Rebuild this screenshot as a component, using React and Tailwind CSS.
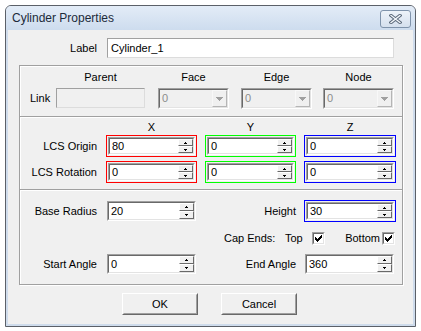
import React from 'react';

function Arrow({ up, color = '#000' }) {
  return (
    <svg width="3" height="2" viewBox="0 0 3 2" shapeRendering="crispEdges">
      {up ? (
        <path d="M1 0h1v1h1v1H0V1h1z" fill={color} />
      ) : (
        <path d="M0 0h3v1H2v1H1V1H0z" fill={color} />
      )}
    </svg>
  );
}

function ComboArrow() {
  return (
    <svg width="7" height="4" viewBox="0 0 7 4" shapeRendering="crispEdges">
      <path d="M0 0h7v1H6v1H5v1H4v1H3V3H2V2H1V1H0z" fill="#a0a0a0" />
    </svg>
  );
}

function Sunken({ className, inner = 'bg-white', children }) {
  return (
    <div className={`border border-t-[#a0a0a0] border-l-[#a0a0a0] border-r-white border-b-white ${className}`}>
      <div className={`flex h-full w-full border border-t-[#696969] border-l-[#696969] border-r-[#e3e3e3] border-b-[#e3e3e3] ${inner}`}>
        {children}
      </div>
    </div>
  );
}

function SpinBtn({ up }) {
  return (
    <div className="flex flex-1 items-center justify-center border border-t-white border-l-white border-r-[#696969] border-b-[#696969] bg-[#f0f0f0]">
      <Arrow up={up} />
    </div>
  );
}

function Spin({ value, className }) {
  return (
    <Sunken className={className}>
      <span className="flex flex-1 items-center pl-[2px] leading-none">{value}</span>
      <div className="flex h-full w-[15px] flex-col">
        <SpinBtn up />
        <SpinBtn />
      </div>
    </Sunken>
  );
}

function Combo() {
  return (
    <Sunken className="h-[21px] w-[71px]" inner="bg-[#f0f0f0]">
      <span className="flex flex-1 items-center pl-[2px] text-[#8c8c8c]">0</span>
      <div className="flex w-[15px] items-center justify-center border border-t-[#f8f8f8] border-l-[#f8f8f8] border-r-[#b5b5b5] border-b-[#b5b5b5] bg-[#f0f0f0]">
        <ComboArrow />
      </div>
    </Sunken>
  );
}

function Check() {
  return (
    <Sunken className="h-[13px] w-[13px]">
      <svg width="9" height="9" viewBox="0 0 9 9" shapeRendering="crispEdges">
        <path d="M7 1h1v3H7v1H6v1H5v1H4v1H3V7H2V6H1V3h1v1h1v1h1V4h1V3h1V2h1z" fill="#000" />
      </svg>
    </Sunken>
  );
}

function Button({ children, className }) {
  return (
    <div className={`h-[22px] w-[76px] border border-t-white border-l-white border-r-[#696969] border-b-[#696969] ${className}`}>
      <div className="flex h-full w-full items-center justify-center border border-t-[#f0f0f0] border-l-[#f0f0f0] border-r-[#a0a0a0] border-b-[#a0a0a0] bg-[#f0f0f0]">
        {children}
      </div>
    </div>
  );
}

function Header({ children, className }) {
  return <div className={`h-[13px] text-center leading-[13px] ${className}`}>{children}</div>;
}

export default function App() {
  return (
    <div className="h-[331px] w-[421px] bg-white pl-[5px] pt-[5px] font-['Liberation_Sans',Arial,sans-serif] text-[11px] text-black">
      <div className="flex h-[322px] w-[411px] flex-col overflow-hidden rounded-t-[6px] border border-[#5b6068] bg-[#cfdcec]">
        {/* title bar */}
        <div className="flex h-[24px] items-center justify-between bg-gradient-to-b from-[#e3ecf7] to-[#cddcee] pl-[6px] pr-[4px]">
          <span className="text-[12px] text-[#1c2a3a]">Cylinder Properties</span>
          <div className="mt-[1px] flex h-[18px] w-[31px] items-center justify-center rounded-[3px] border border-[#7f93ab] bg-gradient-to-b from-[#eef3f9] to-[#d5e0ee]">
            <svg width="13" height="10" viewBox="0 0 13 10">
              <path d="M2 1.5l9 7M11 1.5l-9 7" stroke="#5d6b7c" strokeWidth="3.4" strokeLinecap="square" />
              <path d="M2 1.5l9 7M11 1.5l-9 7" stroke="#f4f7fb" strokeWidth="1.3" strokeLinecap="square" />
            </svg>
          </div>
        </div>

        {/* client */}
        <div className="mx-[2px] h-[294px] bg-[#f0f0f0]">
          <div className="mt-[8px] flex h-[20px] items-center">
            <div className="w-[89px] text-right">Label</div>
            <div className="ml-[10px] flex h-[20px] w-[287px] items-center border border-t-[#a0a0a0] border-l-[#a0a0a0] border-r-[#dcdcdc] border-b-[#dcdcdc] bg-white pl-[3px]">
              Cylinder_1
            </div>
          </div>

          <div className="ml-[11px] mt-[7px] w-[384px] border border-[#a0a0a0] shadow-[inset_1px_1px_0_#fff,1px_1px_0_#fff]">
            {/* link */}
            <div className="flex h-[50px] pl-[10px] pt-[5px]">
              <div className="flex w-[26px] flex-col">
                <Header />
                <div className="mt-[4px] flex h-[20px] items-center">Link</div>
              </div>
              <div className="flex w-[89px] flex-col">
                <Header>Parent</Header>
                <div className="mt-[4px] h-[20px] border border-t-[#a0a0a0] border-l-[#a0a0a0] border-r-[#dcdcdc] border-b-[#dcdcdc] bg-[#f0f0f0]" />
              </div>
              <div className="ml-[13px] flex w-[71px] flex-col">
                <Header>Face</Header>
                <div className="mt-[4px]"><Combo /></div>
              </div>
              <div className="ml-[12px] flex w-[71px] flex-col">
                <Header>Edge</Header>
                <div className="mt-[4px]"><Combo /></div>
              </div>
              <div className="ml-[11px] flex w-[71px] flex-col">
                <Header>Node</Header>
                <div className="mt-[4px]"><Combo /></div>
              </div>
            </div>

            {/* lcs */}
            <div className="h-[73px] border-t border-[#a0a0a0] pt-[4px] shadow-[inset_0_1px_0_#fff]">
              <div className="flex pl-[86px]">
                <Header className="w-[91px]">X</Header>
                <Header className="ml-[8px] w-[91px]">Y</Header>
                <Header className="ml-[8px] w-[92px]">Z</Header>
              </div>
              <div className="mt-[1px] flex h-[22px] items-center">
                <div className="w-[77px] text-right">LCS Origin</div>
                <div className="ml-[9px] h-[22px] w-[91px] border border-[#ff0000] p-px"><Spin value="80" className="h-full w-full" /></div>
                <div className="ml-[8px] h-[22px] w-[91px] border border-[#00ff00] p-px"><Spin value="0" className="h-full w-full" /></div>
                <div className="ml-[8px] h-[22px] w-[92px] border border-[#0000ff] p-px"><Spin value="0" className="h-full w-full" /></div>
              </div>
              <div className="mt-[4px] flex h-[22px] items-center">
                <div className="w-[77px] text-right">LCS Rotation</div>
                <div className="ml-[9px] h-[22px] w-[91px] border border-[#ff0000] p-px"><Spin value="0" className="h-full w-full" /></div>
                <div className="ml-[8px] h-[22px] w-[91px] border border-[#00ff00] p-px"><Spin value="0" className="h-full w-full" /></div>
                <div className="ml-[8px] h-[22px] w-[92px] border border-[#0000ff] p-px"><Spin value="0" className="h-full w-full" /></div>
              </div>
            </div>

            {/* geometry */}
            <div className="h-[95px] border-t border-[#a0a0a0] pt-[10px] shadow-[inset_0_1px_0_#fff]">
              <div className="flex h-[22px] items-center">
                <div className="w-[77px] text-right">Base Radius</div>
                <Spin value="20" className="ml-[10px] h-[20px] w-[89px]" />
                <div className="w-[100px] text-right">Height</div>
                <div className="ml-[8px] h-[22px] w-[92px] border border-[#0000ff] p-px"><Spin value="30" className="h-full w-full" /></div>
              </div>
              <div className="mt-[10px] flex h-[13px] items-center">
                <div className="ml-[204px] w-[61px]">Cap Ends:</div>
                <div className="w-[27px]">Top</div>
                <Check />
                <div className="w-[57px] pr-[2px] text-right">Bottom</div>
                <Check />
              </div>
              <div className="mt-[9px] flex h-[20px] items-center">
                <div className="w-[77px] text-right">Start Angle</div>
                <Spin value="0" className="ml-[10px] h-[20px] w-[89px]" />
                <div className="w-[100px] text-right">End Angle</div>
                <Spin value="360" className="ml-[9px] h-[20px] w-[89px]" />
              </div>
            </div>
          </div>

          <div className="mt-[8px] flex pl-[114px]">
            <Button>OK</Button>
            <Button className="ml-[23px]">Cancel</Button>
          </div>
        </div>
      </div>
    </div>
  );
}
